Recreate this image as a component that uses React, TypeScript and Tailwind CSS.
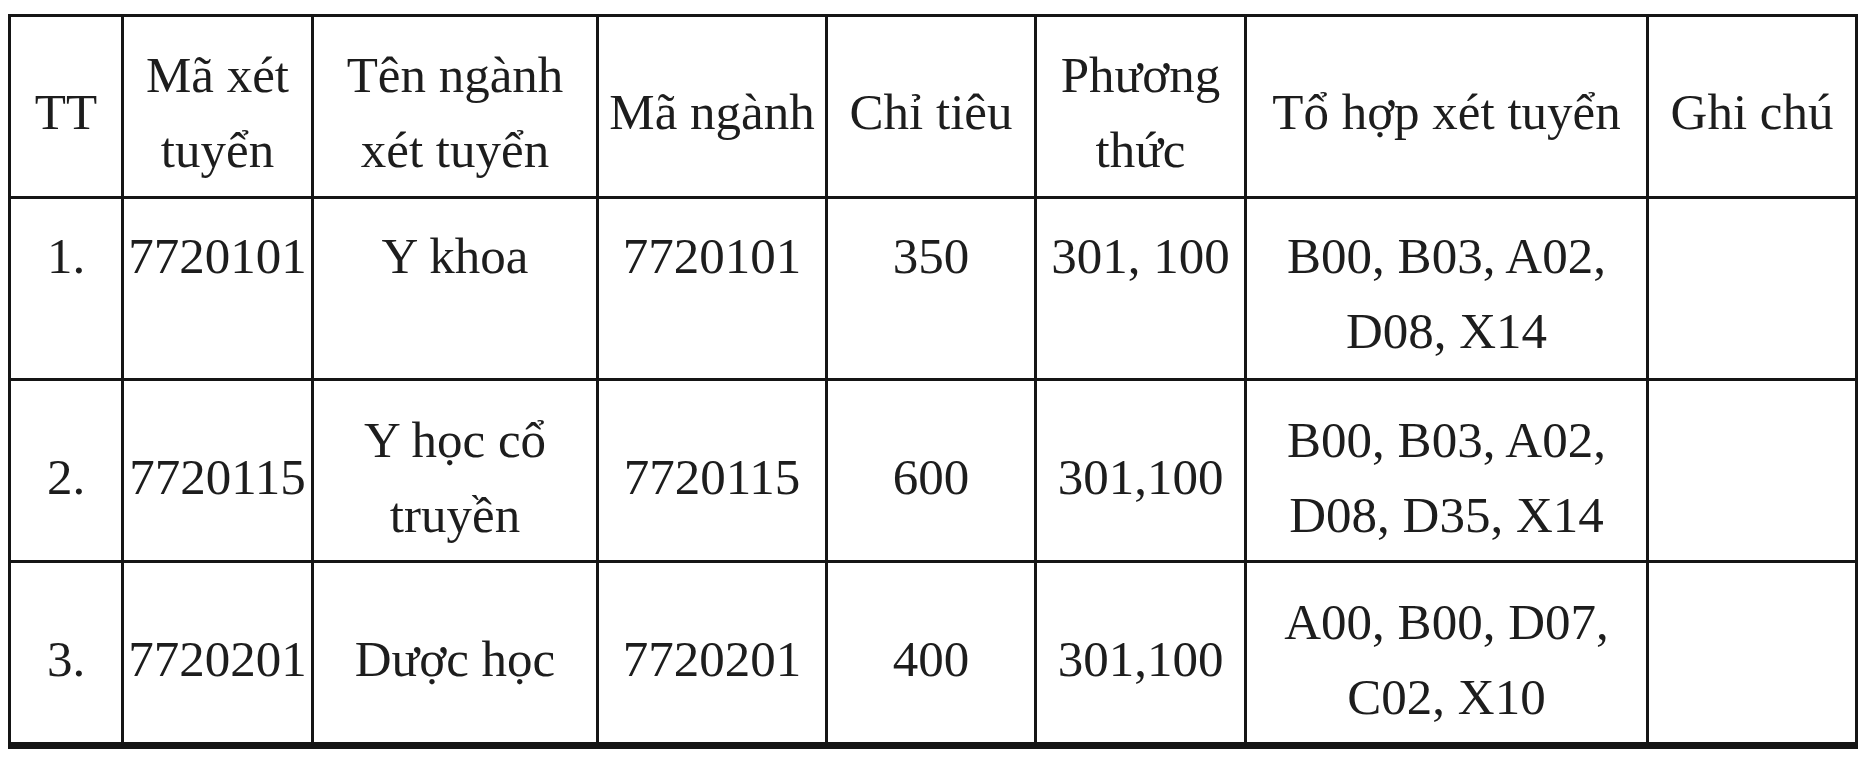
import React from "react";

type Cell = { lines: string[] };

const widths = [
  "w-[113px]",
  "w-[190px]",
  "w-[285px]",
  "w-[229px]",
  "w-[209px]",
  "w-[210px]",
  "w-[402px]",
  "w-[209px]",
];

const header: string[][] = [
  ["TT"],
  ["Mã xét", "tuyển"],
  ["Tên ngành", "xét tuyển"],
  ["Mã ngành"],
  ["Chỉ tiêu"],
  ["Phương", "thức"],
  ["Tổ hợp xét tuyển"],
  ["Ghi chú"],
];

const rows: { top: boolean; cells: string[][] }[] = [
  {
    top: true,
    cells: [
      ["1."],
      ["7720101"],
      ["Y khoa"],
      ["7720101"],
      ["350"],
      ["301, 100"],
      ["B00, B03, A02,", "D08, X14"],
      [],
    ],
  },
  {
    top: false,
    cells: [
      ["2."],
      ["7720115"],
      ["Y học cổ", "truyền"],
      ["7720115"],
      ["600"],
      ["301,100"],
      ["B00, B03, A02,", "D08, D35, X14"],
      [],
    ],
  },
  {
    top: false,
    cells: [
      ["3."],
      ["7720201"],
      ["Dược học"],
      ["7720201"],
      ["400"],
      ["301,100"],
      ["A00, B00, D07,", "C02, X10"],
      [],
    ],
  },
];

const Lines = ({ lines }: Cell) => (
  <div className="text-center whitespace-nowrap">
    {lines.map((l, i) => (
      <div key={i}>{l}</div>
    ))}
  </div>
);

export default function App() {
  return (
    <div
      className="min-h-screen w-full bg-white pl-[8px] pt-[14px] text-[51px] leading-[75px] text-[#1d1d1d]"
      style={{ fontFamily: '"Liberation Serif", "Times New Roman", serif' }}
    >
      <div className="inline-flex flex-col border-l-[3px] border-t-[3px] border-[#151515]">
        {/* header */}
        <div className="flex h-[182px]">
          {header.map((h, i) => (
            <div
              key={i}
              className={`${widths[i]} flex shrink-0 items-center justify-center border-b-[3px] border-r-[3px] border-[#151515] pt-[12px]`}
            >
              <Lines lines={h} />
            </div>
          ))}
        </div>
        {rows.map((r, ri) => (
          <div
            key={ri}
            className={`flex ${ri === rows.length - 1 ? "h-[186px]" : "h-[182px]"}`}
          >
            {r.cells.map((c, ci) => (
              <div
                key={ci}
                className={`${widths[ci]} flex shrink-0 justify-center border-r-[3px] border-[#151515] ${
                  ri === rows.length - 1 ? "border-b-[7px]" : "border-b-[3px]"
                } ${r.top ? "items-start pt-[20px]" : "items-center pt-[14px]"}`}
              >
                <Lines lines={c} />
              </div>
            ))}
          </div>
        ))}
      </div>
    </div>
  );
}
